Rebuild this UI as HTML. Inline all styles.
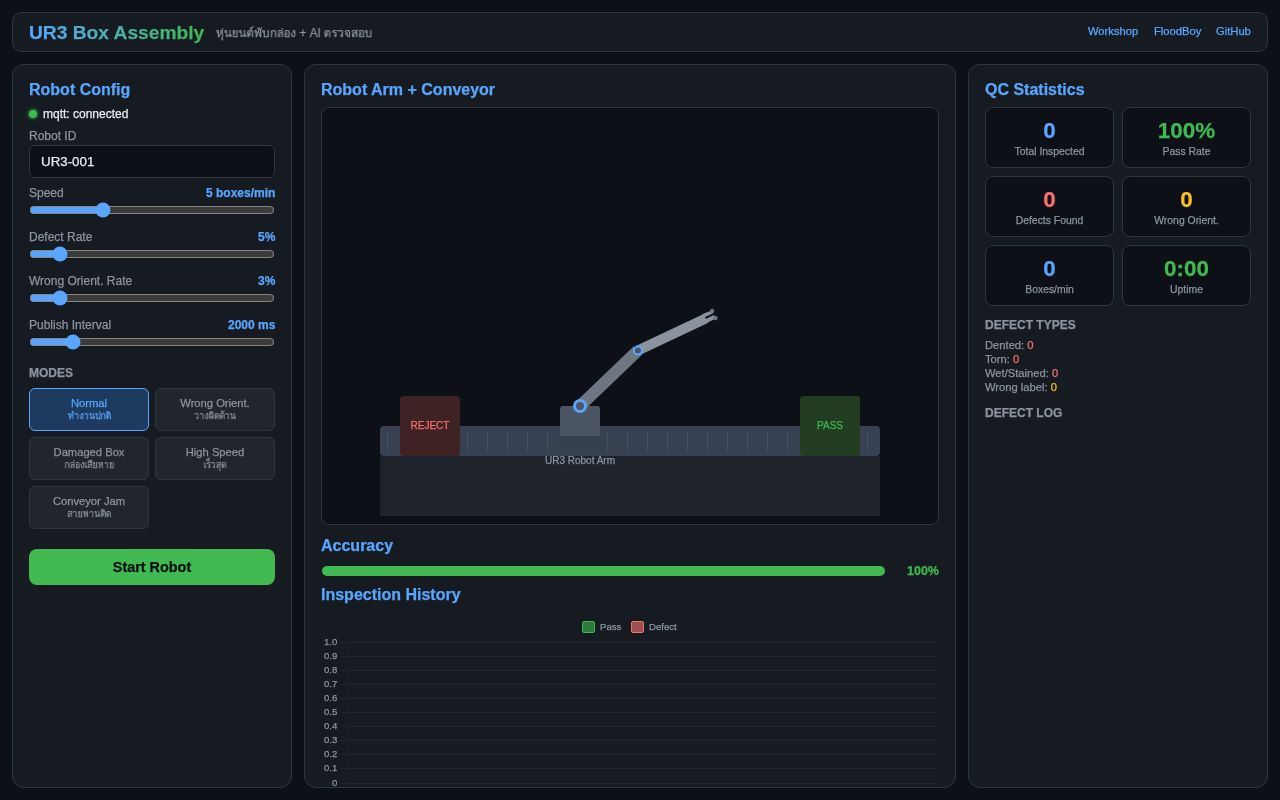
<!DOCTYPE html>
<html lang="en"><head><meta charset="utf-8"><title>UR3 Box Assembly</title>
<style>
html,body{margin:0;padding:0;width:1280px;height:800px;overflow:hidden;background:#0d1117;font-family:"Liberation Sans",sans-serif;color-scheme:dark}
.t{position:absolute;white-space:nowrap;will-change:transform;-webkit-text-stroke:0.25px}
.b{position:absolute;box-sizing:border-box}
input[type=range]{position:absolute;margin:0;accent-color:#58a6ff;width:246px;height:16px;left:29px}
</style></head><body>
<div class="b" style="left:12px;top:12px;width:1256px;height:40px;background:#161b22;border:1px solid #30363d;border-radius:10px"></div>
<div class="t" style="left:29px;top:20.05px;font-size:19.2px;line-height:25px;color:transparent;font-weight:bold;background:linear-gradient(90deg,#58a6ff,#3fb950);-webkit-background-clip:text;background-clip:text;">UR3 Box Assembly</div>
<div class="t" style="left:216px;top:24.84px;font-size:12px;line-height:16px;color:#8b949e;transform:scaleX(0.978);transform-origin:0 50%;">หุ่นยนต์พับกล่อง + AI ตรวจสอบ</div>
<div class="t" style="left:1088px;top:24.37px;font-size:11.2px;line-height:15px;color:#58a6ff;">Workshop</div>
<div class="t" style="left:1154px;top:24.37px;font-size:11.2px;line-height:15px;color:#58a6ff;">FloodBoy</div>
<div class="t" style="left:1216px;top:24.37px;font-size:11.2px;line-height:15px;color:#58a6ff;">GitHub</div>
<div class="b" style="left:12px;top:64px;width:280px;height:724px;background:#161b22;border:1px solid #30363d;border-radius:12px"></div>
<div class="b" style="left:304px;top:64px;width:652px;height:724px;background:#161b22;border:1px solid #30363d;border-radius:12px"></div>
<div class="b" style="left:968px;top:64px;width:300px;height:724px;background:#161b22;border:1px solid #30363d;border-radius:12px"></div>
<div class="t" style="left:29px;top:78.86px;font-size:16px;line-height:21px;color:#58a6ff;font-weight:bold;">Robot Config</div>
<div class="b" style="left:29px;top:110px;width:8px;height:8px;background:#3fb950;border-radius:50%;box-shadow:0 0 4px #3fb950"></div>
<div class="t" style="left:42.5px;top:106.24px;font-size:12px;line-height:16px;color:#e6edf3;">mqtt: connected</div>
<div class="t" style="left:29px;top:127.84px;font-size:12px;line-height:16px;color:#8b949e;">Robot ID</div>
<div class="b" style="left:29px;top:145px;width:246px;height:33px;background:#0d1117;border:1px solid #30363d;border-radius:6px"></div>
<div class="t" style="left:40.5px;top:152.78px;font-size:13.333px;line-height:17px;color:#e6edf3;">UR3-001</div>
<div class="t" style="left:29px;top:184.84px;font-size:12px;line-height:16px;color:#8b949e;">Speed</div>
<div class="t" style="right:1005px;top:184.84px;font-size:12px;line-height:16px;color:#58a6ff;text-align:right;font-weight:bold;">5 boxes/min</div>
<input type="range" min="1" max="15" value="5" style="top:202px">
<div class="t" style="left:29px;top:228.84px;font-size:12px;line-height:16px;color:#8b949e;">Defect Rate</div>
<div class="t" style="right:1005px;top:228.84px;font-size:12px;line-height:16px;color:#58a6ff;text-align:right;font-weight:bold;">5%</div>
<input type="range" min="0" max="50" value="5" style="top:246px">
<div class="t" style="left:29px;top:272.84px;font-size:12px;line-height:16px;color:#8b949e;">Wrong Orient. Rate</div>
<div class="t" style="right:1005px;top:272.84px;font-size:12px;line-height:16px;color:#58a6ff;text-align:right;font-weight:bold;">3%</div>
<input type="range" min="0" max="30" value="3" style="top:290px">
<div class="t" style="left:29px;top:316.84px;font-size:12px;line-height:16px;color:#8b949e;">Publish Interval</div>
<div class="t" style="right:1005px;top:316.84px;font-size:12px;line-height:16px;color:#58a6ff;text-align:right;font-weight:bold;">2000 ms</div>
<input type="range" min="500" max="10000" value="2000" style="top:334px">
<div class="t" style="left:29px;top:364.64px;font-size:12px;line-height:16px;color:#8b949e;font-weight:bold;">MODES</div>
<div class="b" style="left:29px;top:388px;width:120px;height:43px;background:#1f3a5f;border:1px solid #58a6ff;border-radius:6px"></div>
<div class="t" style="left:29.0px;width:120px;top:395.52px;font-size:11.2px;line-height:15px;color:#58a6ff;text-align:center;">Normal</div>
<div class="t" style="left:29.0px;width:120px;top:409.34px;font-size:10px;line-height:13px;color:#58a6ff;text-align:center;transform:scaleX(0.875);">ทำงานปกติ</div>
<div class="b" style="left:155px;top:388px;width:120px;height:43px;background:#21262d;border:1px solid #30363d;border-radius:6px"></div>
<div class="t" style="left:155.0px;width:120px;top:395.52px;font-size:11.2px;line-height:15px;color:#8b949e;text-align:center;">Wrong Orient.</div>
<div class="t" style="left:155.0px;width:120px;top:409.34px;font-size:10px;line-height:13px;color:#8b949e;text-align:center;transform:scaleX(0.875);">วางผิดด้าน</div>
<div class="b" style="left:29px;top:437px;width:120px;height:43px;background:#21262d;border:1px solid #30363d;border-radius:6px"></div>
<div class="t" style="left:29.0px;width:120px;top:444.52px;font-size:11.2px;line-height:15px;color:#8b949e;text-align:center;">Damaged Box</div>
<div class="t" style="left:29.0px;width:120px;top:458.34px;font-size:10px;line-height:13px;color:#8b949e;text-align:center;transform:scaleX(0.875);">กล่องเสียหาย</div>
<div class="b" style="left:155px;top:437px;width:120px;height:43px;background:#21262d;border:1px solid #30363d;border-radius:6px"></div>
<div class="t" style="left:155.0px;width:120px;top:444.52px;font-size:11.2px;line-height:15px;color:#8b949e;text-align:center;">High Speed</div>
<div class="t" style="left:155.0px;width:120px;top:458.34px;font-size:10px;line-height:13px;color:#8b949e;text-align:center;transform:scaleX(0.875);">เร็วสุด</div>
<div class="b" style="left:29px;top:486px;width:120px;height:43px;background:#21262d;border:1px solid #30363d;border-radius:6px"></div>
<div class="t" style="left:29.0px;width:120px;top:493.52px;font-size:11.2px;line-height:15px;color:#8b949e;text-align:center;">Conveyor Jam</div>
<div class="t" style="left:29.0px;width:120px;top:507.33px;font-size:10px;line-height:13px;color:#8b949e;text-align:center;transform:scaleX(0.875);">สายพานติด</div>
<div class="b" style="left:29px;top:549px;width:246px;height:36px;background:#3fb950;border-radius:8px"></div>
<div class="t" style="left:29.0px;width:246px;top:557.61px;font-size:14.4px;line-height:19px;color:#0d1117;text-align:center;font-weight:bold;">Start Robot</div>
<div class="t" style="left:321px;top:78.96px;font-size:16px;line-height:21px;color:#58a6ff;font-weight:bold;">Robot Arm + Conveyor</div>
<div class="b" style="left:321px;top:107px;width:618px;height:418px;background:#0d1117;border:1px solid #30363d;border-radius:8px"></div>
<svg class="b" style="left:0;top:0;width:1280px;height:800px;position:absolute" width="1280" height="800" viewBox="0 0 1280 800">
<rect x="380" y="456" width="500" height="60" fill="#1f232b"/>
<rect x="380" y="426" width="500" height="30" rx="4" fill="#374151"/>
<g stroke="#465060" stroke-width="1"><line x1="387.5" y1="431" x2="387.5" y2="451"/><line x1="407.5" y1="431" x2="407.5" y2="451"/><line x1="427.5" y1="431" x2="427.5" y2="451"/><line x1="447.5" y1="431" x2="447.5" y2="451"/><line x1="467.5" y1="431" x2="467.5" y2="451"/><line x1="487.5" y1="431" x2="487.5" y2="451"/><line x1="507.5" y1="431" x2="507.5" y2="451"/><line x1="527.5" y1="431" x2="527.5" y2="451"/><line x1="547.5" y1="431" x2="547.5" y2="451"/><line x1="607.5" y1="431" x2="607.5" y2="451"/><line x1="627.5" y1="431" x2="627.5" y2="451"/><line x1="647.5" y1="431" x2="647.5" y2="451"/><line x1="667.5" y1="431" x2="667.5" y2="451"/><line x1="687.5" y1="431" x2="687.5" y2="451"/><line x1="707.5" y1="431" x2="707.5" y2="451"/><line x1="727.5" y1="431" x2="727.5" y2="451"/><line x1="747.5" y1="431" x2="747.5" y2="451"/><line x1="767.5" y1="431" x2="767.5" y2="451"/><line x1="787.5" y1="431" x2="787.5" y2="451"/><line x1="807.5" y1="431" x2="807.5" y2="451"/><line x1="827.5" y1="431" x2="827.5" y2="451"/><line x1="847.5" y1="431" x2="847.5" y2="451"/><line x1="867.5" y1="431" x2="867.5" y2="451"/></g>
<path d="M560,436 V409 Q560,406 563,406 H597 Q600,406 600,409 V436 Z" fill="#4b5563"/>
<line x1="580" y1="406" x2="637.9" y2="350.5" stroke="#6e7681" stroke-width="12" stroke-linecap="butt"/>
<rect x="555" y="436" width="50" height="15" fill="#36404f"/>
<g transform="translate(637.9,350.5) rotate(-25.2)"><rect x="0" y="-5" width="75" height="10" fill="#8b949e"/></g>
<g transform="translate(637.9,350.5) rotate(-25.7)">
<polygon points="74,-5 84,-4 84,-0.9 74,-0.9" fill="#8b949e"/>
<polygon points="74,0.9 84,0.9 84,4.8 74,5" fill="#8b949e"/>
<circle cx="84" cy="-3.4" r="2.1" fill="#6e7681"/>
<circle cx="84" cy="4.4" r="2.1" fill="#6e7681"/>
</g>
<circle cx="580" cy="406" r="5.5" fill="#4b5563" stroke="#58a6ff" stroke-width="3"/>
<circle cx="637.9" cy="350.5" r="4" fill="#4b5563" stroke="#58a6ff" stroke-width="2"/>
<rect x="400" y="396" width="60" height="60" rx="4" fill="#3e2224"/>
<rect x="800" y="396" width="60" height="60" rx="4" fill="#233d23"/>
</svg>
<div class="t" style="left:400.0px;width:60px;top:419.14px;font-size:10px;line-height:13px;color:#f87171;text-align:center;">REJECT</div>
<div class="t" style="left:800.0px;width:60px;top:419.14px;font-size:10px;line-height:13px;color:#3fb950;text-align:center;">PASS</div>
<div class="t" style="left:530.0px;width:100px;top:453.79px;font-size:10px;line-height:13px;color:#8b949e;text-align:center;">UR3 Robot Arm</div>
<div class="t" style="left:321px;top:534.96px;font-size:16px;line-height:21px;color:#58a6ff;font-weight:bold;">Accuracy</div>
<div class="b" style="left:322px;top:566px;width:563px;height:10px;background:#3fb950;border-radius:5px"></div>
<div class="t" style="right:341px;top:562.67px;font-size:12.5px;line-height:16px;color:#3fb950;text-align:right;font-weight:bold;">100%</div>
<div class="t" style="left:321px;top:583.96px;font-size:16px;line-height:21px;color:#58a6ff;font-weight:bold;">Inspection History</div>
<div class="b" style="left:582px;top:621px;width:13px;height:12px;background:rgba(63,185,80,0.6);border:1px solid #3fb950;border-radius:2px"></div>
<div class="t" style="left:600px;top:620.67px;font-size:9.6px;line-height:12px;color:#8b949e;">Pass</div>
<div class="b" style="left:631px;top:621px;width:13px;height:12px;background:rgba(248,113,113,0.6);border:1px solid #f87171;border-radius:2px"></div>
<div class="t" style="left:648.5px;top:620.67px;font-size:9.6px;line-height:12px;color:#8b949e;">Defect</div>
<div class="t" style="right:942.5px;top:636.27px;font-size:9.6px;line-height:12px;color:#8b949e;text-align:right;">1.0</div>
<div class="t" style="right:942.5px;top:650.27px;font-size:9.6px;line-height:12px;color:#8b949e;text-align:right;">0.9</div>
<div class="t" style="right:942.5px;top:664.27px;font-size:9.6px;line-height:12px;color:#8b949e;text-align:right;">0.8</div>
<div class="t" style="right:942.5px;top:678.27px;font-size:9.6px;line-height:12px;color:#8b949e;text-align:right;">0.7</div>
<div class="t" style="right:942.5px;top:692.27px;font-size:9.6px;line-height:12px;color:#8b949e;text-align:right;">0.6</div>
<div class="t" style="right:942.5px;top:706.27px;font-size:9.6px;line-height:12px;color:#8b949e;text-align:right;">0.5</div>
<div class="t" style="right:942.5px;top:720.27px;font-size:9.6px;line-height:12px;color:#8b949e;text-align:right;">0.4</div>
<div class="t" style="right:942.5px;top:734.27px;font-size:9.6px;line-height:12px;color:#8b949e;text-align:right;">0.3</div>
<div class="t" style="right:942.5px;top:748.27px;font-size:9.6px;line-height:12px;color:#8b949e;text-align:right;">0.2</div>
<div class="t" style="right:942.5px;top:762.27px;font-size:9.6px;line-height:12px;color:#8b949e;text-align:right;">0.1</div>
<div class="t" style="right:942.5px;top:777.27px;font-size:9.6px;line-height:12px;color:#8b949e;text-align:right;">0</div>
<svg class="b" style="left:0;top:0;position:absolute" width="1280" height="800"><line x1="348.5" y1="642" x2="348.5" y2="784" stroke="#1b2027" stroke-width="1"/><g stroke="#21262d" stroke-width="1"><line x1="341" y1="642.5" x2="348" y2="642.5"/><line x1="349" y1="642.5" x2="939" y2="642.5"/><line x1="341" y1="656.5" x2="348" y2="656.5"/><line x1="349" y1="656.5" x2="939" y2="656.5"/><line x1="341" y1="670.5" x2="348" y2="670.5"/><line x1="349" y1="670.5" x2="939" y2="670.5"/><line x1="341" y1="684.5" x2="348" y2="684.5"/><line x1="349" y1="684.5" x2="939" y2="684.5"/><line x1="341" y1="698.5" x2="348" y2="698.5"/><line x1="349" y1="698.5" x2="939" y2="698.5"/><line x1="341" y1="712.5" x2="348" y2="712.5"/><line x1="349" y1="712.5" x2="939" y2="712.5"/><line x1="341" y1="726.5" x2="348" y2="726.5"/><line x1="349" y1="726.5" x2="939" y2="726.5"/><line x1="341" y1="740.5" x2="348" y2="740.5"/><line x1="349" y1="740.5" x2="939" y2="740.5"/><line x1="341" y1="754.5" x2="348" y2="754.5"/><line x1="349" y1="754.5" x2="939" y2="754.5"/><line x1="341" y1="768.5" x2="348" y2="768.5"/><line x1="349" y1="768.5" x2="939" y2="768.5"/><line x1="341" y1="783.5" x2="348" y2="783.5"/><line x1="349" y1="783.5" x2="939" y2="783.5"/></g></svg>
<div class="t" style="left:985px;top:78.96px;font-size:16px;line-height:21px;color:#58a6ff;font-weight:bold;">QC Statistics</div>
<div class="b" style="left:985px;top:107px;width:129px;height:61px;background:#0d1117;border:1px solid #30363d;border-radius:8px"></div>
<div class="t" style="left:985.0px;width:129px;top:115.74px;font-size:22.4px;line-height:29px;color:#58a6ff;text-align:center;font-weight:bold;">0</div>
<div class="t" style="left:985.0px;width:129px;top:145.00px;font-size:10.4px;line-height:14px;color:#8b949e;text-align:center;">Total Inspected</div>
<div class="b" style="left:1122px;top:107px;width:129px;height:61px;background:#0d1117;border:1px solid #30363d;border-radius:8px"></div>
<div class="t" style="left:1122.0px;width:129px;top:115.74px;font-size:22.4px;line-height:29px;color:#3fb950;text-align:center;font-weight:bold;">100%</div>
<div class="t" style="left:1122.0px;width:129px;top:145.00px;font-size:10.4px;line-height:14px;color:#8b949e;text-align:center;">Pass Rate</div>
<div class="b" style="left:985px;top:176px;width:129px;height:61px;background:#0d1117;border:1px solid #30363d;border-radius:8px"></div>
<div class="t" style="left:985.0px;width:129px;top:184.74px;font-size:22.4px;line-height:29px;color:#f87171;text-align:center;font-weight:bold;">0</div>
<div class="t" style="left:985.0px;width:129px;top:214.00px;font-size:10.4px;line-height:14px;color:#8b949e;text-align:center;">Defects Found</div>
<div class="b" style="left:1122px;top:176px;width:129px;height:61px;background:#0d1117;border:1px solid #30363d;border-radius:8px"></div>
<div class="t" style="left:1122.0px;width:129px;top:184.74px;font-size:22.4px;line-height:29px;color:#fbbf24;text-align:center;font-weight:bold;">0</div>
<div class="t" style="left:1122.0px;width:129px;top:214.00px;font-size:10.4px;line-height:14px;color:#8b949e;text-align:center;">Wrong Orient.</div>
<div class="b" style="left:985px;top:245px;width:129px;height:61px;background:#0d1117;border:1px solid #30363d;border-radius:8px"></div>
<div class="t" style="left:985.0px;width:129px;top:253.74px;font-size:22.4px;line-height:29px;color:#58a6ff;text-align:center;font-weight:bold;">0</div>
<div class="t" style="left:985.0px;width:129px;top:283.00px;font-size:10.4px;line-height:14px;color:#8b949e;text-align:center;">Boxes/min</div>
<div class="b" style="left:1122px;top:245px;width:129px;height:61px;background:#0d1117;border:1px solid #30363d;border-radius:8px"></div>
<div class="t" style="left:1122.0px;width:129px;top:253.74px;font-size:22.4px;line-height:29px;color:#3fb950;text-align:center;font-weight:bold;">0:00</div>
<div class="t" style="left:1122.0px;width:129px;top:283.00px;font-size:10.4px;line-height:14px;color:#8b949e;text-align:center;">Uptime</div>
<div class="t" style="left:985px;top:317.09px;font-size:12px;line-height:16px;color:#8b949e;font-weight:bold;">DEFECT TYPES</div>
<div class="t" style="left:985px;top:338.37px;font-size:11.2px;line-height:15px;color:#8b949e;">Dented: <span style="color:#f87171">0</span></div>
<div class="t" style="left:985px;top:352.37px;font-size:11.2px;line-height:15px;color:#8b949e;">Torn: <span style="color:#f87171">0</span></div>
<div class="t" style="left:985px;top:366.37px;font-size:11.2px;line-height:15px;color:#8b949e;">Wet/Stained: <span style="color:#f87171">0</span></div>
<div class="t" style="left:985px;top:380.37px;font-size:11.2px;line-height:15px;color:#8b949e;">Wrong label: <span style="color:#fbbf24">0</span></div>
<div class="t" style="left:985px;top:404.59px;font-size:12px;line-height:16px;color:#8b949e;font-weight:bold;">DEFECT LOG</div>
</body></html>
